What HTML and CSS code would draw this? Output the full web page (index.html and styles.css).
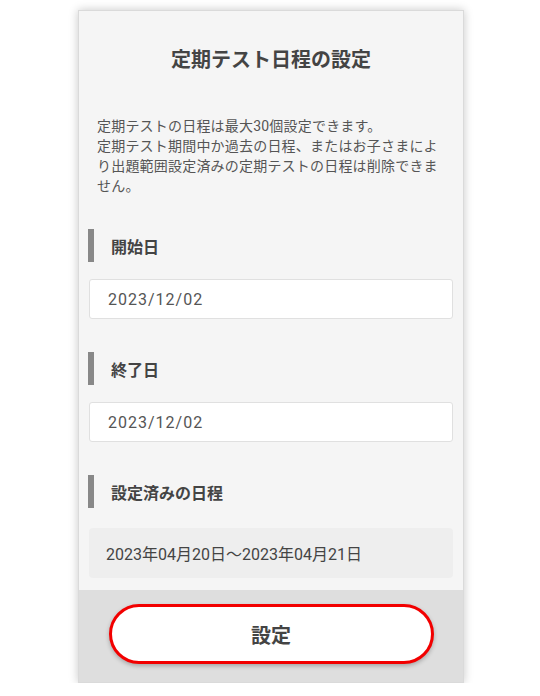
FILE: index.html
```html
<!DOCTYPE html>
<html lang="ja">
<head>
<meta charset="utf-8">
<link rel="stylesheet" href="styles.css">
</head>
<body>
<div class="card">
  <div class="content">
    <h1 class="title">定期テスト日程の設定</h1>
    <p class="desc">定期テストの日程は最大30個設定できます。<br>定期テスト期間中か過去の日程、またはお子さまにより出題範囲設定済みの定期テストの日程は削除できません。</p>
    <div class="label">開始日</div>
    <div class="input">2023/12/02</div>
    <div class="label">終了日</div>
    <div class="input">2023/12/02</div>
    <div class="label">設定済みの日程</div>
    <div class="range">2023年04月20日〜2023年04月21日</div>
  </div>
  <div class="footer">
    <button class="btn">設定</button>
  </div>
</div>
</body>
</html>
```

FILE: styles.css
```css
html, body {
  margin: 0;
  padding: 0;
  background: #ffffff;
}
body {
  font-family: Roboto, "Noto Sans CJK JP", sans-serif;
  color: #555;
}
.card {
  margin: 10px 0 0 78px;
  width: 384px;
  height: 671px;
  background: #f5f5f5;
  border: 1px solid #dadada;
  box-shadow: 0 0 9px rgba(0, 0, 0, 0.22);
  display: flex;
  flex-direction: column;
}
.content {
  flex: 1;
  padding: 35px 10px 0 10px;
}
.title {
  margin: 0;
  text-align: center;
  font-size: 20px;
  line-height: 28px;
  font-weight: bold;
  color: #444;
}
.desc {
  margin: 42px 0 0 0;
  padding: 0 8px;
  font-size: 14px;
  line-height: 20px;
  letter-spacing: 0.2px;
  color: #555;
}
.label {
  margin: 33px 0 0 -1px;
  height: 33px;
  border-left: 6px solid #888;
  padding-left: 17px;
  display: flex;
  align-items: center;
  font-size: 16px;
  font-weight: bold;
  color: #444;
}
.input {
  margin-top: 17px;
  height: 38px;
  background: #fff;
  border: 1px solid #e0e0e0;
  border-radius: 3px;
  padding-left: 18px;
  display: flex;
  align-items: center;
  font-size: 16px;
  letter-spacing: 1px;
  color: #555;
}
.range {
  margin-top: 20px;
  height: 50px;
  background: #eeeeee;
  border-radius: 4px;
  padding-left: 17px;
  display: flex;
  align-items: center;
  font-size: 16px;
  color: #444;
}
.footer {
  height: 92px;
  background: #dedede;
  display: flex;
  justify-content: center;
  padding-top: 14px;
  box-sizing: border-box;
}
.btn {
  width: 325px;
  height: 60px;
  background: #fff;
  border: 3px solid #f20000;
  border-radius: 30px;
  box-shadow: 0 2px 4px rgba(0, 0, 0, 0.25);
  font-family: Roboto, "Noto Sans CJK JP", sans-serif;
  font-size: 20px;
  font-weight: bold;
  color: #444;
  padding: 0;
}
```
